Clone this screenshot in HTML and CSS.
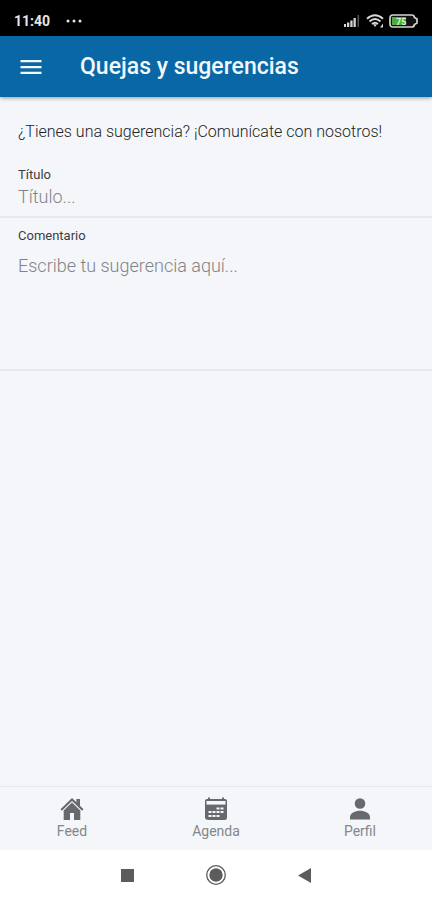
FILE: index.html
```html
<!DOCTYPE html>
<html lang="es">
<head>
<meta charset="utf-8">
<meta name="viewport" content="width=device-width, initial-scale=1">
<title>Quejas y sugerencias</title>
<link rel="stylesheet" href="styles.css">
</head>
<body>
<div class="status">
  <span class="clock">11:40</span>
  <svg class="dots" width="16" height="4" viewBox="0 0 16 4" fill="currentColor" aria-hidden="true"><circle cx="2" cy="2" r="1.5"/><circle cx="8" cy="2" r="1.5"/><circle cx="14" cy="2" r="1.5"/></svg>
  <div class="indicators">
    <svg width="18" height="14" viewBox="0 0 18 14" aria-hidden="true">
      <path d="M1 10h2v3H1zM4 8.500h2.300V13H4zM7.300 6.500h2.300V13H7.300zM10.500 4h2.300v9h-2.300z" fill="#d4d4d4"/>
      <path d="M14.500 1h1.500v12h-1.500z" fill="#555"/>
    </svg>
    <svg width="18" height="14" viewBox="0 0 18 14" fill="none" stroke="#d8d8d8" stroke-width="1.900" aria-hidden="true">
      <path d="M1 4.800Q9-2.200 17 4.800M3.500 7.500Q9 2.600 14.500 7.500M6 10Q9 7.400 12 10"/>
      <path d="M7 10.200h4L9 13zM14 13.500l3-4v4z" fill="#d8d8d8" stroke="none"/>
    </svg>
    <svg class="battery" width="29" height="14" viewBox="0 0 29 14" aria-hidden="true">
      <path d="M4 1h19q2 0 2.500 2.500L28 5v4l-2.500 1.500Q25 13 23 13H4q-3 0-3-3V4q0-3 3-3z" fill="#111" stroke="#d5d5d5" stroke-width="1.700"/>
      <path d="M3 3h14v8H3z" fill="#4caf35"/>
      <text x="7" y="10.500" class="charge">75</text>
    </svg>
  </div>
</div>
<header class="toolbar">
  <button class="menu" type="button" aria-label="Menú">
    <svg width="22" height="16" viewBox="0 0 22 16" fill="currentColor" aria-hidden="true"><path d="M0.500 1h21v2.300h-21zM0.500 6.900h21v2.300h-21zM0.500 12.700h21V15h-21z"/></svg>
  </button>
  <h1>Quejas y sugerencias</h1>
</header>
<main>
  <p class="intro">¿Tienes una sugerencia? ¡Comunícate con nosotros!</p>
  <form>
    <div class="field">
      <label for="titulo">Título</label>
      <input id="titulo" type="text" placeholder="Título...">
    </div>
    <div class="field">
      <label for="comentario">Comentario</label>
      <textarea id="comentario" placeholder="Escribe tu sugerencia aquí..."></textarea>
    </div>
  </form>
</main>
<nav class="tabs">
  <a href="#feed">
    <svg width="24" height="24" viewBox="0 0 24 24" fill="currentColor" aria-hidden="true"><path d="M12 1L0.500 12.300l1.400 1.400L12 4l10.100 9.700 1.400-1.400L20 8.800V2h-3.600v3.300z"/><path d="M12 5.500l-8.300 8V23H10v-7h4v7h6.300v-9.500z"/></svg>
    <span>Feed</span>
  </a>
  <a href="#agenda">
    <svg width="24" height="24" viewBox="0 0 24 24" aria-hidden="true">
      <path d="M3 2h1V.5h2V2h12V.5h2V2h1q2 0 2 2v16.500q0 2.500-2.500 2.500h-15Q1 23 1 20.500V4q0-2 2-2z" fill="#68696c"/>
      <path d="M2.500 4h19v3.600h-19z" fill="#f4f6fa"/>
      <path d="M12.500 10.500h3v2h-3zM16.500 10.500h3v2h-3zM4.500 14h3v2h-3zM8.500 14h3v2h-3zM12.500 14h3v2h-3zM16.500 14h3v2h-3zM4.500 18h3v2h-3zM8.500 18h3v2h-3zM12.500 18h3v2h-3z" fill="#f4f6fa"/>
    </svg>
    <span>Agenda</span>
  </a>
  <a href="#perfil">
    <svg width="24" height="24" viewBox="0 0 24 24" fill="currentColor" aria-hidden="true"><circle cx="12" cy="6.500" r="5.300"/><path d="M2 22.500v-2.300C2 16 7 13.800 12 13.800S22 16 22 20.200v2.300z"/></svg>
    <span>Perfil</span>
  </a>
</nav>
<div class="system">
  <button type="button" aria-label="Recientes"><svg width="22" height="22" viewBox="0 0 22 22" fill="currentColor" aria-hidden="true"><path d="M5 5h13v13H5z"/></svg></button>
  <button type="button" aria-label="Inicio"><svg width="22" height="22" viewBox="0 0 22 22" aria-hidden="true"><circle cx="11" cy="11" r="9.300" fill="none" stroke="currentColor" stroke-width="1.300"/><circle cx="11" cy="11" r="6.700" fill="currentColor"/></svg></button>
  <button type="button" aria-label="Atrás"><svg width="22" height="22" viewBox="0 0 22 22" fill="currentColor" aria-hidden="true"><path d="M4 11.500l13-7.500v15z"/></svg></button>
</div>
</body>
</html>
```
FILE: styles.css
```css
* {
  box-sizing: border-box;
}

body {
  margin: 0;
  min-height: 100vh;
  display: flex;
  flex-direction: column;
  background: #f4f6fa;
  color: #3c3d40;
  font-family: Roboto, "Liberation Sans", sans-serif;
}

svg {
  display: block;
}

button {
  display: flex;
  padding: 0;
  border: 0;
  background: none;
  color: inherit;
}

.status {
  display: flex;
  align-items: center;
  gap: 16px;
  height: 36px;
  padding: 5px 14px 0;
  background: #000;
  color: #e4e4e4;
}

.clock {
  font-size: 14px;
  font-weight: 700;
}

.indicators {
  display: flex;
  align-items: center;
  gap: 5px;
  margin-left: auto;
}

.charge {
  fill: #d9f2d2;
  font-size: 9px;
  font-weight: 700;
}

.toolbar {
  display: flex;
  align-items: center;
  gap: 38px;
  height: 61px;
  padding: 0 20px;
  background: #0a67a5;
  color: #f2f8fc;
  box-shadow: 0 1px 4px rgba(0, 0, 0, 0.4);
}

h1 {
  margin: 0;
  font-size: 23px;
  font-weight: 500;
}

main {
  flex: 1;
}

.intro {
  margin: 0;
  padding: 25px 18px 24px;
  color: #222326;
  font-size: 16px;
  font-weight: 300;
  line-height: 20px;
}

.field {
  display: flex;
  flex-direction: column;
  border-bottom: 2px solid #e6e8ec;
}

label {
  padding: 0 18px;
  font-size: 13px;
  line-height: 18px;
}

input,
textarea {
  width: 100%;
  margin: 0;
  border: 0;
  outline: 0;
  background: none;
  color: inherit;
  font: 300 18px/24px Roboto, "Liberation Sans", sans-serif;
  resize: none;
}

input {
  height: 32px;
  padding: 0 18px 8px;
}

textarea {
  height: 124px;
  padding: 9px 18px;
}

.field + .field {
  padding-top: 9px;
}

::placeholder {
  color: #828387;
  opacity: 1;
}

.tabs {
  display: grid;
  grid-template-columns: repeat(3, 1fr);
  height: 64px;
  border-top: 1px solid #e6e8ec;
}

.tabs a {
  display: flex;
  flex-direction: column;
  align-items: center;
  padding-top: 10px;
  color: #68696c;
  font-size: 14px;
  line-height: 20px;
  text-decoration: none;
}

.tabs span {
  color: #85868a;
}

.system {
  display: flex;
  justify-content: center;
  align-items: center;
  gap: 67px;
  height: 50px;
  background: #fff;
  color: #5c5c5c;
}
```
